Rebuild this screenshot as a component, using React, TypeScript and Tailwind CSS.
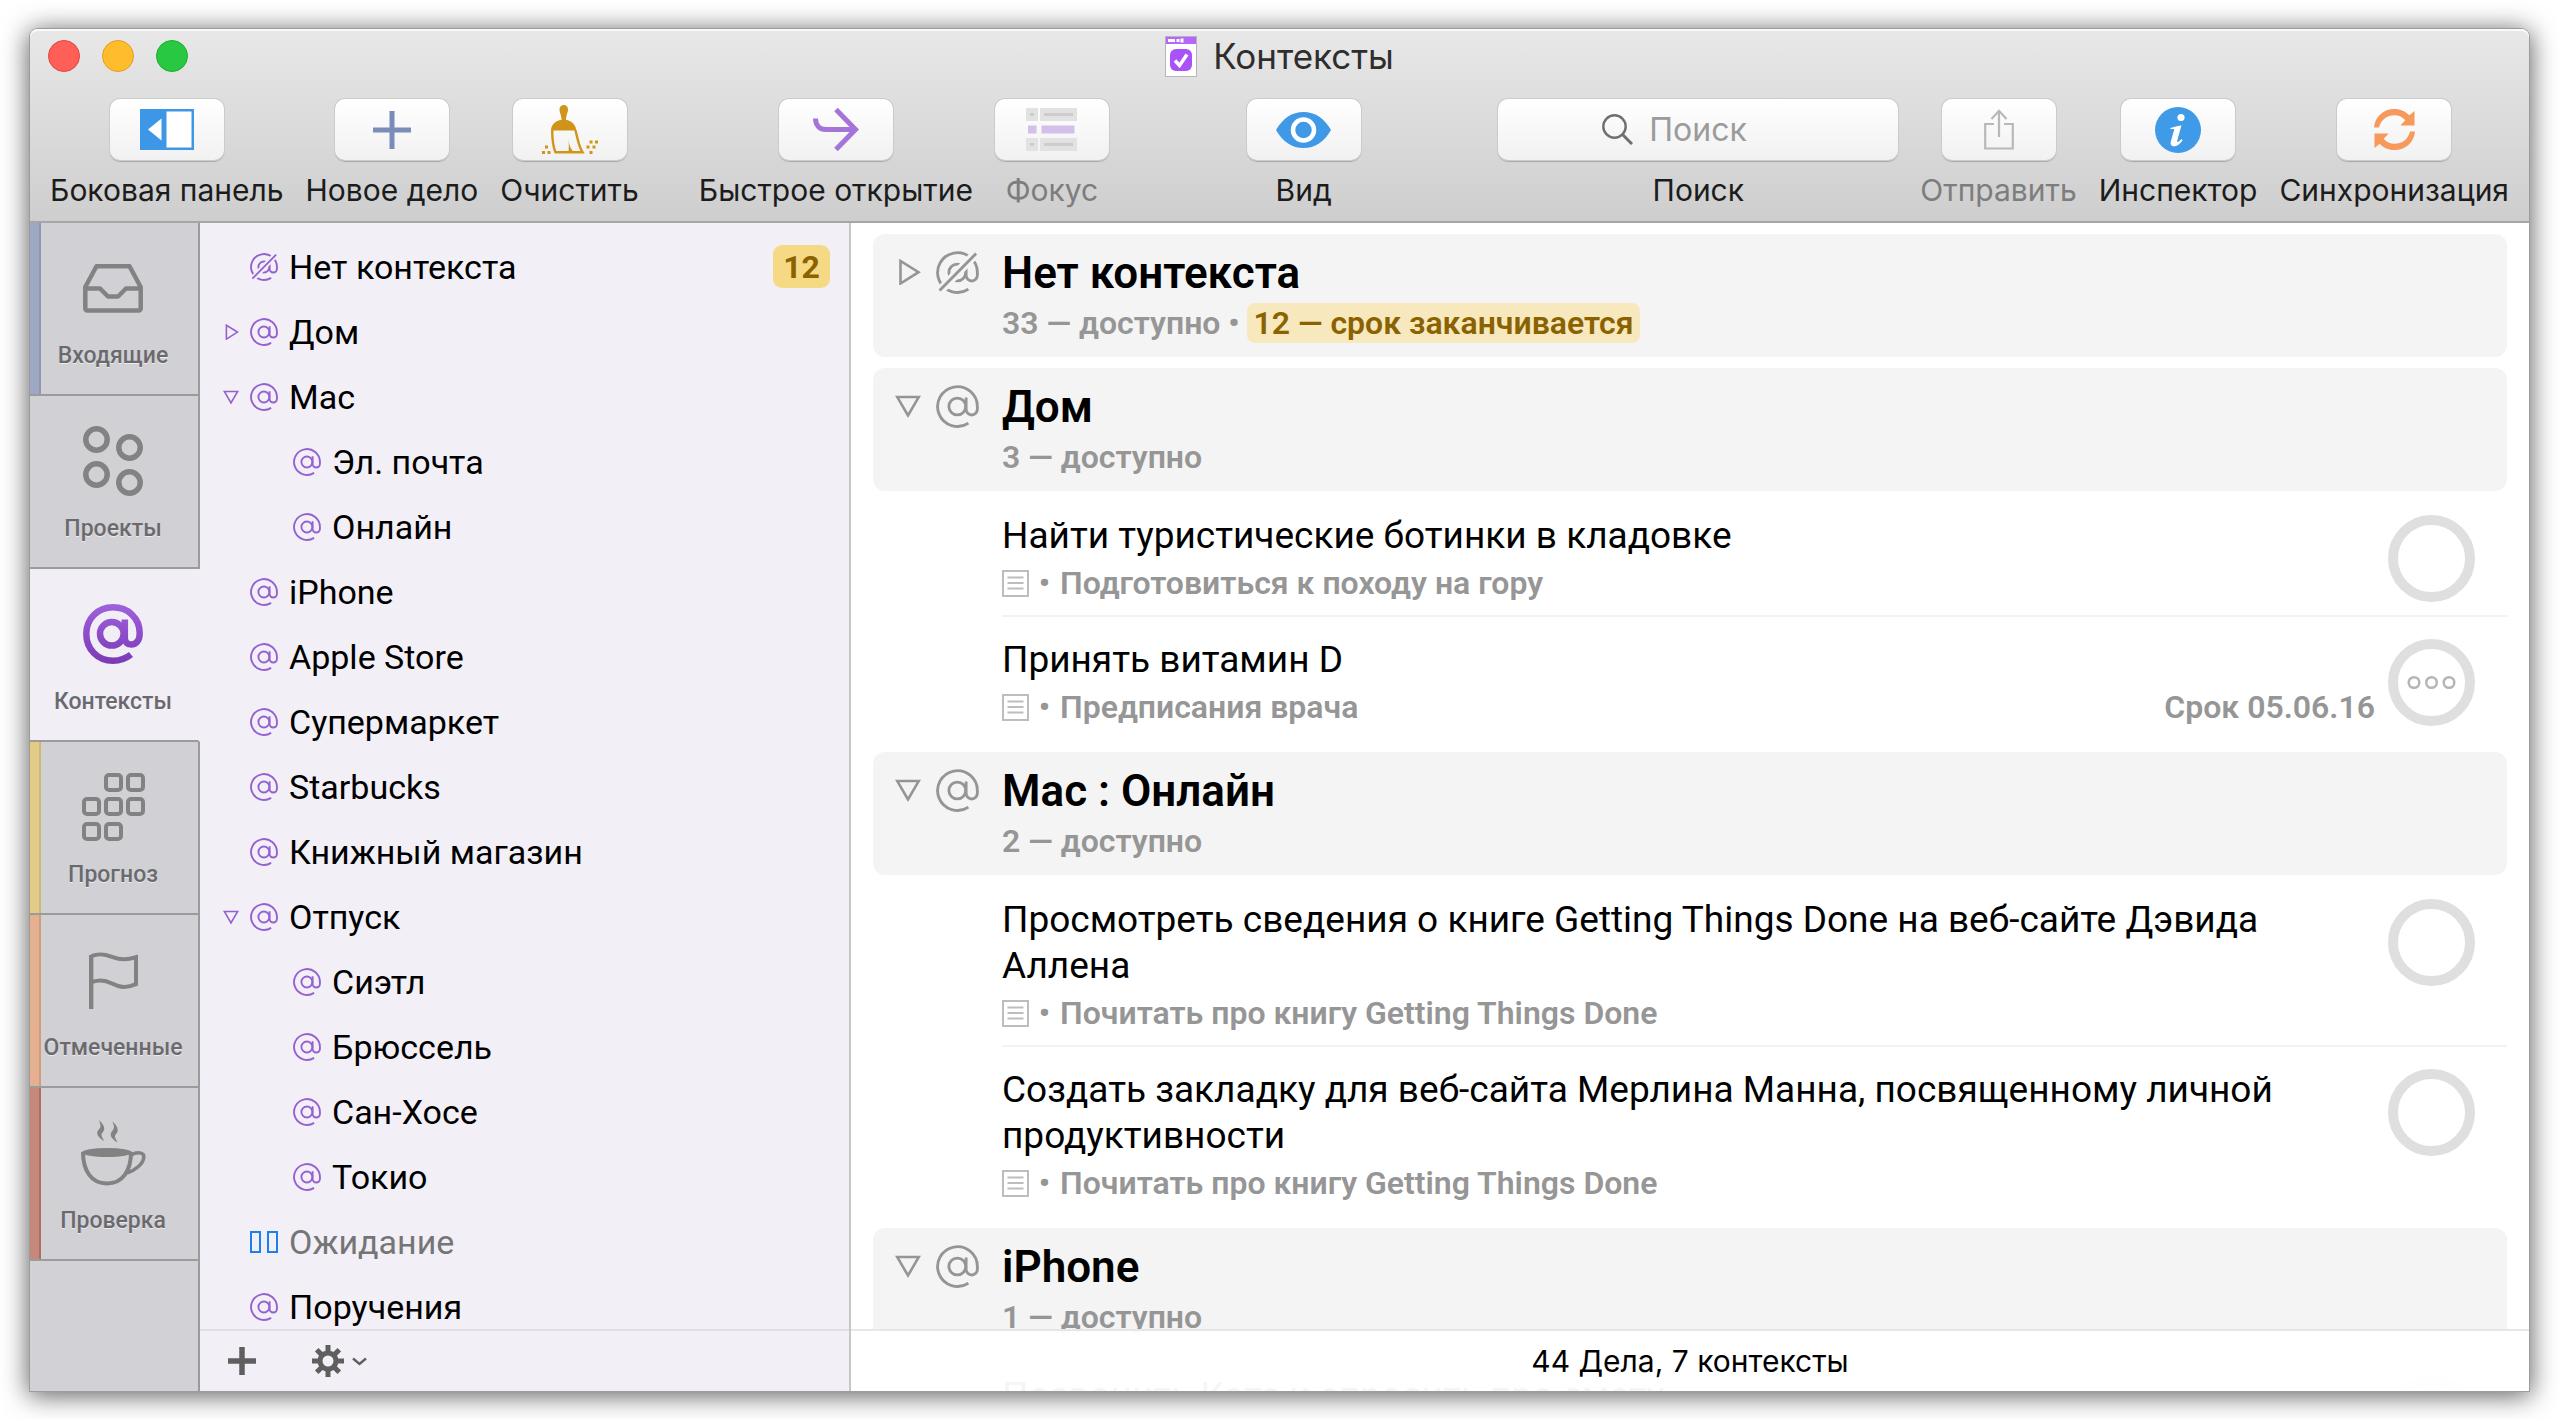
import { ReactNode, useState } from "react";

type ContextItem = {
  name: string;
  level?: number;
  arrow?: "right" | "down";
  kind?: "none" | "waiting";
  badge?: number;
};

const CONTEXTS: ContextItem[] = [
  { name: "Нет контекста", kind: "none", badge: 12 },
  { name: "Дом", arrow: "right" },
  { name: "Мас", arrow: "down" },
  { name: "Эл. почта", level: 1 },
  { name: "Онлайн", level: 1 },
  { name: "iPhone" },
  { name: "Apple Store" },
  { name: "Супермаркет" },
  { name: "Starbucks" },
  { name: "Книжный магазин" },
  { name: "Отпуск", arrow: "down" },
  { name: "Сиэтл", level: 1 },
  { name: "Брюссель", level: 1 },
  { name: "Сан-Хосе", level: 1 },
  { name: "Токио", level: 1 },
  { name: "Ожидание", kind: "waiting" },
  { name: "Поручения" },
];

type Task = { title: string; project: string; due?: string; repeats?: boolean };
type Group = { title: string; count: string; dueSoon?: string; none?: boolean; closed?: boolean; tasks: Task[] };

const GROUPS: Group[] = [
  { title: "Нет контекста", count: "33 — доступно", dueSoon: "12 — срок заканчивается", none: true, closed: true, tasks: [] },
  {
    title: "Дом",
    count: "3 — доступно",
    tasks: [
      { title: "Найти туристические ботинки в кладовке", project: "Подготовиться к походу на гору" },
      { title: "Принять витамин D", project: "Предписания врача", due: "Срок 05.06.16", repeats: true },
    ],
  },
  {
    title: "Мас : Онлайн",
    count: "2 — доступно",
    tasks: [
      { title: "Просмотреть сведения о книге Getting Things Done на веб-сайте Дэвида Аллена", project: "Почитать про книгу Getting Things Done" },
      { title: "Создать закладку для веб-сайта Мерлина Манна, посвященному личной продуктивности", project: "Почитать про книгу Getting Things Done" },
    ],
  },
  {
    title: "iPhone",
    count: "1 — доступно",
    tasks: [{ title: "Позвонить Кате и спросить про смету", project: "Подготовиться к походу на гору" }],
  },
];

/* ---------- icons ---------- */

function AtIcon({ className }: { className: string }) {
  return (
    <svg viewBox="0 0 24 24" fill="none" stroke="currentColor" strokeWidth="1.6" className={className}>
      <circle cx="11.9" cy="12" r="4.7" />
      <path d="M16.8 7v6.6a3.1 3.1 0 0 0 6.3 0V12a11.1 11.1 0 1 0-5 9.3" />
    </svg>
  );
}

function NoContextIcon({ className, cut }: { className: string; cut: string }) {
  return (
    <svg viewBox="0 0 24 24" fill="none" stroke="currentColor" strokeWidth="1.6" className={className}>
      <circle cx="11.9" cy="12" r="4.7" />
      <path d="M16.8 7v6.6a3.1 3.1 0 0 0 6.3 0V12a11.1 11.1 0 1 0-5 9.3" />
      <path d="M1 23.5 23 .5" className={cut} strokeWidth="5" />
      <path d="M2 22 22.4 1.4" />
    </svg>
  );
}

function Arrow({ dir, className }: { dir: "right" | "down"; className: string }) {
  return (
    <svg viewBox="0 0 26 26" fill="none" stroke="currentColor" strokeWidth="2.6" className={className}>
      {dir === "right" ? <path d="M5.5 2v22.5L23.5 13.200z" /> : <path d="M2.200 4h21.600L13 22.500z" />}
    </svg>
  );
}

function SidebarIcon() {
  return (
    <svg viewBox="0 0 54 41" className="h-[41px] w-[54px]">
      <rect width="54" height="41" fill="#3e97e6" />
      <rect x="26.500" y="2.500" width="25" height="36" fill="#fff" />
      <path d="M21.500 9.500v22L8 20.500z" fill="#fff" />
    </svg>
  );
}

function PlusIcon() {
  return (
    <svg viewBox="0 0 38 38" className="size-[38px]" fill="#7a8cb9">
      <path d="M16.500 0h5v16.500H38v5H21.500V38h-5V21.500H0v-5h16.500z" />
    </svg>
  );
}

function BroomIcon() {
  return (
    <svg viewBox="0 0 56 49" className="h-[49px] w-14" fill="#cf9418">
      <path d="M17.500 4.500c0-3 2-4.500 4.300-4.500S26 1.500 26 4.500c0 2.500-1.500 5-2.200 10.300 5.700.8 10 4.700 10.400 10.700H9c.3-6 4.300-9.900 10.700-10.700C19 9.500 17.500 7 17.500 4.500z" />
      <path d="M10.200 25c0 9 .6 16 3.300 22.200H40.500C36.500 41 35.500 33 33.400 25" fill="none" stroke="#cf9418" strokeWidth="2.400" />
      <path d="M26.500 34c.4 5 1.500 9 5 13h-5c.4-4 .4-8 0-13z" />
      <path d="M0 46h3v3H0zM5.500 46h3v3h-3zM3 40.500h3v3H3zM44.500 40.500h3v3h-3zM50.500 40.500h3v3h-3zM47.500 46h3v3h-3zM47.500 35.500h3v3h-3zM53 35.500h3v3h-3z" />
    </svg>
  );
}

function QuickOpenIcon() {
  return (
    <svg viewBox="0 0 46 43" className="h-[43px] w-[46px]" fill="none" stroke="#a474d8" strokeWidth="5">
      <path d="M2.500 10.500c0 6.500 4 11 10.500 11h29" />
      <path d="M23 1.500 42.500 21.500 23 41.500" />
    </svg>
  );
}

function FocusIcon() {
  return (
    <svg viewBox="0 0 51 43" className="h-[43px] w-[51px]">
      {[0, 30].map((y) => (
        <g key={y}>
          <rect y={y} width="12" height="13" fill="#e2e2e2" />
          <rect x="14" y={y} width="37" height="13" fill="#e2e2e2" />
          <rect x="4" y={y + 5} width="4" height="3" fill="#cdcdcd" />
          <rect x="18" y={y + 5} width="29" height="3" fill="#cdcdcd" />
        </g>
      ))}
      <rect x="2" y="17.500" width="8.500" height="8" fill="#d3c0ea" />
      <rect x="15.500" y="17.500" width="33" height="8" fill="#d3c0ea" />
    </svg>
  );
}

function EyeIcon() {
  return (
    <svg viewBox="0 0 55 36" className="h-9 w-[55px]">
      <path d="M0 18C7 6 16 0 27.500 0S48 6 55 18C48 30 39 36 27.500 36S7 30 0 18z" fill="#3f99e6" />
      <circle cx="27.500" cy="18" r="10.500" fill="none" stroke="#fff" strokeWidth="4.500" />
    </svg>
  );
}

function SearchIcon() {
  return (
    <svg viewBox="0 0 31 31" className="size-[31px] shrink-0" fill="none" stroke="#6f6f6f" strokeWidth="2.400">
      <circle cx="12.500" cy="12.500" r="11.200" />
      <path d="M20.500 20.500 30 30" strokeWidth="3" />
    </svg>
  );
}

function ShareIcon() {
  return (
    <svg viewBox="0 0 30 41" className="h-[41px] w-[30px]" fill="none" stroke="#b8b8b8" strokeWidth="2.200">
      <path d="M10 15H1.200v24.500h27.600V15H20M15 28V2M7.500 10 15 1.800l7.500 8.200" />
    </svg>
  );
}

function InfoIcon() {
  return (
    <svg viewBox="0 0 46 46" className="size-[46px]">
      <circle cx="23" cy="23" r="23" fill="#3f9ae8" />
      <circle cx="26" cy="10.500" r="3.600" fill="#fff" />
      <path d="M15.500 21c3.500-1 7.500-2 11-2.800l-4.300 15.500c-.5 2 .9 2 4.300-1.700l1.200 1.200c-3.200 4.400-5.900 6-8.600 6-2.900 0-4-2-3.200-5l3.200-11.300c.3-1-.3-1.300-3.600-.7z" fill="#fff" />
    </svg>
  );
}

function SyncIcon() {
  return (
    <svg viewBox="0 0 41 41" className="size-[41px]" fill="#f6995a">
      <path d="M0 18.500C1 7.500 9.500 0 20.500 0c6 0 11 2.300 14.800 6.300L40.500 2v14.500H26.300l5-5.200C28.500 8 25 6.200 20.500 6.200 13 6.200 7 10.500 5 18.500z" />
      <path d="M41 22.500C40 33.500 31.500 41 20.500 41c-6 0-11-2.300-14.800-6.300L.5 39V24.500h14.200l-5 5.200c2.800 3.300 6.300 5.100 10.800 5.100 7.500 0 13.500-4.300 15.500-12.300z" />
    </svg>
  );
}

function DocumentIcon() {
  return (
    <svg viewBox="0 0 32 41" className="h-[41px] w-8">
      <rect x=".5" y=".5" width="31" height="40" fill="#fff" stroke="#b5b5b5" />
      <rect x="1" y="1" width="30" height="7" fill="#b667fb" />
      <path d="M3 4.500h7M11.500 4.500h3M17 2.500v4" stroke="#fff" strokeWidth="3" />
      <rect x="5" y="13" width="22" height="22" rx="6" fill="#a952f7" />
      <path d="m10 24.500 4.500 5L22 18.500" fill="none" stroke="#fff" strokeWidth="3.500" />
    </svg>
  );
}

function NoteIcon() {
  return (
    <svg viewBox="0 0 27 27" className="size-[27px]" fill="none" stroke="#bdbdbd" strokeWidth="2">
      <rect x="1" y="1" width="25" height="25" />
      <path d="M5.500 7.500h16M5.500 13h16M5.500 18.500h16" />
    </svg>
  );
}

function InboxIcon() {
  return (
    <svg viewBox="0 0 60 49" className="h-[49px] w-[60px]" fill="none" stroke="#828282" strokeWidth="4.500" strokeLinejoin="round">
      <path d="M2.300 23 13.500 2.300h33L57.700 23v21.500a2 2 0 0 1-2 2H4.300a2 2 0 0 1-2-2z" />
      <path d="M3 24.500h14l8 8h10l8-8h14" />
    </svg>
  );
}

function ProjectsIcon() {
  return (
    <svg viewBox="0 0 60 70" className="h-[70px] w-[60px]" fill="none" stroke="#828282" strokeWidth="5.500">
      <circle cx="13.500" cy="13.500" r="10.700" />
      <circle cx="46.500" cy="21.500" r="10.700" />
      <circle cx="13.500" cy="48.500" r="10.700" />
      <circle cx="46.500" cy="56.500" r="10.700" />
    </svg>
  );
}

function ContextsIcon() {
  return (
    <svg viewBox="0 0 60 60" className="size-[60px]" fill="none" stroke="url(#violet)" strokeWidth="6.500">
      <defs>
        <linearGradient id="violet" gradientUnits="userSpaceOnUse" x1="0" y1="0" x2="0" y2="60">
          <stop stopColor="#a061dc" />
          <stop offset="1" stopColor="#7b3ab5" />
        </linearGradient>
      </defs>
      <circle cx="28.800" cy="29.800" r="11.800" />
      <path d="M41.800 15.500v18c0 4.500 2.500 7 6.200 7 5.500 0 8.700-4 8.700-11.500C56.700 14 45 3.300 30 3.300 14.500 3.300 3.300 15 3.300 30S14.500 56.700 30 56.700c7 0 13-2.200 18-6.200" />
    </svg>
  );
}

function ForecastIcon() {
  const cells = [[22, 0], [44, 0], [0, 24], [22, 24], [44, 24], [0, 49], [22, 49]];
  return (
    <svg viewBox="0 0 63 68" className="h-[68px] w-[63px]" fill="none" stroke="#828282" strokeWidth="4">
      {cells.map(([x, y]) => (
        <rect key={`${x}-${y}`} x={x + 2} y={y + 2} width="15" height="15" rx="3" />
      ))}
    </svg>
  );
}

function FlagIcon() {
  return (
    <svg viewBox="0 0 49 57" className="h-[57px] w-[49px]" fill="none" stroke="#828282">
      <path d="M2.200 57V3" strokeWidth="4.400" />
      <path d="M2.500 4C9 1.500 14 1.500 23 4.800S38 8 47 5.200v27C38 36 32 36 23 31.500S8 28.500 2.500 30" strokeWidth="4" />
    </svg>
  );
}

function CupIcon() {
  return (
    <svg viewBox="0 0 65 66" className="h-[66px] w-[65px]" fill="#828282">
      <ellipse cx="26" cy="32.500" rx="25" ry="4.500" />
      <path d="M2 32c0 19 8.500 31.500 24 31.500S50 51 50 32" fill="none" stroke="#828282" strokeWidth="4" />
      <path d="M50 35c6-3.500 13.500-3 12.800 2.500C62 44 55 50 46 53" fill="none" stroke="#828282" strokeWidth="3.500" />
      <path d="M18 0c2.500 2.500 5.500 5.500 5.200 9-.2 3-3.200 4-2.700 6.500.3 1.800 1.500 3 2.500 5.500-3-2-6.800-4.500-6.800-8C16.200 10 19.500 9 19.500 6c0-2-1-4-1.500-6zM31.500 1.500c2.500 2.500 5.500 5.500 5.200 9-.2 3-3.200 4-2.700 6.500.3 1.800 1.500 3 2.500 5.500-3-2-6.800-4.500-6.800-8 0-3 3.300-4.500 3.300-7.500 0-2-1-3.500-1.500-5.500z" />
    </svg>
  );
}

function GearIcon() {
  return (
    <svg viewBox="0 0 32 32" className="size-8" fill="none" stroke="#5f5f5f">
      <circle cx="16" cy="16" r="8" strokeWidth="5" />
      {[0, 45, 90, 135].map((a) => (
        <g key={a} transform={`rotate(${a} 16 16)`}>
          <path d="M16 0v7M16 25v7" strokeWidth="5" />
        </g>
      ))}
    </svg>
  );
}

/* ---------- window parts ---------- */

const TABS: { name: string; icon: ReactNode; strip: string }[] = [
  { name: "Входящие", icon: <InboxIcon />, strip: "border-[#8d97b1] bg-[#9ea8c2]" },
  { name: "Проекты", icon: <ProjectsIcon />, strip: "border-transparent" },
  { name: "Контексты", icon: <ContextsIcon />, strip: "border-transparent" },
  { name: "Прогноз", icon: <ForecastIcon />, strip: "border-[#cfb872] bg-[#e2cb86]" },
  { name: "Отмеченные", icon: <FlagIcon />, strip: "border-[#d09c7c] bg-[#e5b08f]" },
  { name: "Проверка", icon: <CupIcon />, strip: "border-[#ad6e62] bg-[#c5887b]" },
];

function ToolButton({ label, disabled, children }: { label: string; disabled?: boolean; children: ReactNode }) {
  return (
    <button type="button" disabled={disabled} className="flex flex-col items-center gap-[13px] text-[#1c1c1c] disabled:text-[#7d7d7d]">
      <span className="flex h-[61px] w-[114px] items-center justify-center rounded-[10px] bg-linear-to-b from-white to-[#f1f1f1] shadow-[0_0_0_1px_#cbcbcb,0_2px_1px_#a9a9a9]">
        {children}
      </span>
      <span className="text-[30px] leading-[34px] whitespace-nowrap">{label}</span>
    </button>
  );
}

function TitleBar() {
  return (
    <header className="border-b-2 border-[#a6a6a6] bg-linear-to-b from-[#e8e8e8] to-[#cecece] font-[Inter,sans-serif] shadow-[inset_0_2px_0_#fafafa]">
      <div className="grid h-[54px] grid-cols-[1fr_auto_1fr] items-center px-[18px]">
        <div className="flex gap-[22px]">
          <button type="button" aria-label="Закрыть" className="size-8 rounded-full border border-[#e2443f] bg-[#ff5f57]" />
          <button type="button" aria-label="Свернуть" className="size-8 rounded-full border border-[#dfa023] bg-[#ffbd2e]" />
          <button type="button" aria-label="Развернуть" className="size-8 rounded-full border border-[#1dad2b] bg-[#28c940]" />
        </div>
        <div className="flex items-center gap-4">
          <DocumentIcon />
          <h1 className="text-[35px] leading-[40px] text-[#2e2e2e]">Контексты</h1>
        </div>
      </div>
      <div className="flex items-start gap-[22px] px-5 pt-4 pb-[14px]">
        <ToolButton label="Боковая панель"><SidebarIcon /></ToolButton>
        <ToolButton label="Новое дело"><PlusIcon /></ToolButton>
        <ToolButton label="Очистить"><BroomIcon /></ToolButton>
        <div className="w-4" />
        <ToolButton label="Быстрое открытие"><QuickOpenIcon /></ToolButton>
        <ToolButton label="Фокус" disabled><FocusIcon /></ToolButton>
        <div className="flex-1" />
        <ToolButton label="Вид"><EyeIcon /></ToolButton>
        <div className="flex-1" />
        <div className="flex w-[400px] flex-col items-center gap-[13px] text-[#1c1c1c]">
          <div className="flex h-[61px] w-full items-center gap-4 rounded-[10px] bg-linear-to-b from-white to-[#f1f1f1] pl-26 shadow-[0_0_0_1px_#cbcbcb,0_2px_1px_#a9a9a9]">
            <SearchIcon />
            <input id="search" type="search" placeholder="Поиск" className="min-w-0 flex-1 bg-transparent text-[32px] leading-[40px] outline-none placeholder:text-[#9b9b9b]" />
          </div>
          <label htmlFor="search" className="text-[30px] leading-[34px]">Поиск</label>
        </div>
        <ToolButton label="Отправить" disabled><ShareIcon /></ToolButton>
        <ToolButton label="Инспектор"><InfoIcon /></ToolButton>
        <ToolButton label="Синхронизация"><SyncIcon /></ToolButton>
      </div>
    </header>
  );
}

function Tabs({ active, onSelect }: { active: string; onSelect: (name: string) => void }) {
  return (
    <nav className="flex w-[170px] shrink-0 flex-col">
      {TABS.map((tab) => (
        <button
          key={tab.name}
          type="button"
          onClick={() => onSelect(tab.name)}
          className={`relative flex h-[173px] flex-col items-center border-r-2 border-b-2 border-b-[#9b9b9b] pt-[29px] pr-[2px] ${
            tab.name === active ? "border-r-[#f2eff7] bg-[#f1eef6]" : "border-r-[#9b9b9b] bg-[#d1d0d5]"
          }`}
        >
          <span className={`absolute inset-y-0 left-0 w-[11px] border-r-2 ${tab.strip}`} />
          <span className="flex h-18 items-center">{tab.icon}</span>
          <span className="relative mt-4 text-[23px] leading-8 font-medium text-[#6a6a6e] text-shadow-[0_1px_0_#ffffff99]">{tab.name}</span>
        </button>
      ))}
      <div className="flex-1 border-r-2 border-[#9b9b9b] bg-[#d2d1d6]" />
    </nav>
  );
}

function ContextRow({ item }: { item: ContextItem }) {
  return (
    <li className="flex h-[65px] shrink-0 items-center gap-[11px] pr-[19px] pl-[23px] text-[#9560cf]">
      {item.level === 1 && <span className="w-8" />}
      <span className="flex w-4 justify-center">{item.arrow && <Arrow dir={item.arrow} className="size-4 shrink-0" />}</span>
      {item.kind === "none" && <NoContextIcon className="size-7 shrink-0" cut="stroke-[#f2eff7]" />}
      {item.kind === "waiting" && (
        <span className="flex w-7 justify-between">
          <span className="h-[22px] w-[11px] border-2 border-[#1c80ea]" />
          <span className="h-[22px] w-[11px] border-2 border-[#1c80ea]" />
        </span>
      )}
      {!item.kind && <AtIcon className="size-7 shrink-0" />}
      <span className={`flex-1 text-[34px] leading-[44px] ${item.kind === "waiting" ? "text-[#757575]" : "text-black"}`}>{item.name}</span>
      {item.badge && (
        <span className="flex h-[43px] w-[57px] items-center justify-center rounded-[9px] bg-[#f6d985] text-[32px] font-bold text-[#8a6200]">{item.badge}</span>
      )}
    </li>
  );
}

function ContextList() {
  return (
    <aside className="flex w-[651px] shrink-0 flex-col border-r-2 border-[#c6c5c9] bg-[#f2eff7]">
      <ul className="flex min-h-0 flex-1 flex-col overflow-hidden pt-[11px]">
        {CONTEXTS.map((item) => (
          <ContextRow key={item.name} item={item} />
        ))}
      </ul>
      <div className="flex h-[62px] shrink-0 items-center border-t-2 border-[#e0dfe3] pl-7">
        <button type="button" aria-label="Добавить">
          <svg viewBox="0 0 28 28" className="size-7" stroke="#5f5f5f" strokeWidth="5.500">
            <path d="M0 14h28M14 0v28" />
          </svg>
        </button>
        <button type="button" aria-label="Действия" className="ml-14 flex items-center gap-2">
          <GearIcon />
          <svg viewBox="0 0 15 9" className="h-[9px] w-[15px]" fill="none" stroke="#5f5f5f" strokeWidth="2.400">
            <path d="m1 1.500 6.500 5.500L14 1.500" />
          </svg>
        </button>
      </div>
    </aside>
  );
}

function TaskRow({ task }: { task: Task }) {
  return (
    <li className="ml-[129px] flex border-b-2 border-[#f2f2f2] last:border-transparent">
      <div className="flex-1 pt-5 pb-3">
        <p className="max-w-[1300px] text-[37px] leading-[46px] text-black">{task.title}</p>
        <div className="mt-1 flex items-center pr-[13px] text-[32px] leading-[40px] font-semibold text-[#969696]">
          <NoteIcon />
          <span className="w-[31px] text-center">•</span>
          <a href="#project">{task.project}</a>
          {task.due && <span className="ml-auto">{task.due}</span>}
        </div>
      </div>
      <div className="relative mt-[22px] mr-8 size-[87px] shrink-0">
        <input type="checkbox" aria-label={task.title} className="size-full appearance-none rounded-full border-[10px] border-[#dfdfdf] bg-white" />
        {task.repeats && (
          <svg viewBox="0 0 49 15" className="pointer-events-none absolute top-9 left-[19px] h-[15px] w-[49px]" fill="none" stroke="#b5b5b5" strokeWidth="2.500">
            <circle cx="7" cy="7.500" r="5.300" />
            <circle cx="24.500" cy="7.500" r="5.300" />
            <circle cx="42" cy="7.500" r="5.300" />
          </svg>
        )}
      </div>
    </li>
  );
}

function GroupBlock({ group }: { group: Group }) {
  return (
    <section>
      <div className="flex items-start rounded-xl bg-[#f4f4f4] pt-[13px] pb-[14px] pl-[22px] text-[#959595]">
        <Arrow dir={group.closed ? "right" : "down"} className="mt-3 size-[26px]" />
        {group.none ? (
          <NoContextIcon className="mt-1 ml-[15px] size-[43px]" cut="stroke-[#f4f4f4]" />
        ) : (
          <AtIcon className="mt-1 ml-[15px] size-[43px]" />
        )}
        <div className="ml-[23px]">
          <h2 className="text-[44px] leading-[52px] font-semibold text-black">{group.title}</h2>
          <p className="mt-1 flex items-center text-[32px] leading-[40px] font-semibold text-[#969696]">
            {group.count}
            {group.dueSoon && (
              <>
                <span className="w-[27px] text-center">•</span>
                <span className="rounded-lg bg-[#f7e8be] px-[6px] text-[#8a6200]">{group.dueSoon}</span>
              </>
            )}
          </p>
        </div>
      </div>
      {group.tasks.length > 0 && (
        <ul className="pt-0.5">
          {group.tasks.map((task) => (
            <TaskRow key={task.title} task={task} />
          ))}
        </ul>
      )}
    </section>
  );
}

export default function App() {
  const [tab, setTab] = useState("Контексты");

  return (
    <div className="flex h-screen overflow-hidden bg-white pt-[29px] pr-10 pb-[28px] pl-[30px] font-[Roboto,sans-serif]">
      <div className="flex min-w-0 flex-1 flex-col rounded-t-lg shadow-[0_0_0_1px_#9c9c9c,0_3px_26px_2px_rgba(0,0,0,0.62)] *:first:rounded-t-lg">
        <TitleBar />
        <div className="flex min-h-0 flex-1">
          <Tabs active={tab} onSelect={setTab} />
          <ContextList />
          <main className="relative min-w-0 flex-1 overflow-hidden bg-white">
            <div className="flex flex-col gap-[11px] px-[22px] pt-[11px]">
              {GROUPS.map((group) => (
                <GroupBlock key={group.title} group={group} />
              ))}
            </div>
            <footer className="absolute inset-x-0 bottom-0 flex h-[62px] items-center justify-center border-t-2 border-[#e6e6e6] bg-white/96 font-[Inter,sans-serif] text-[30px] text-black">
              44 Дела, 7 контексты
            </footer>
          </main>
        </div>
      </div>
    </div>
  );
}
